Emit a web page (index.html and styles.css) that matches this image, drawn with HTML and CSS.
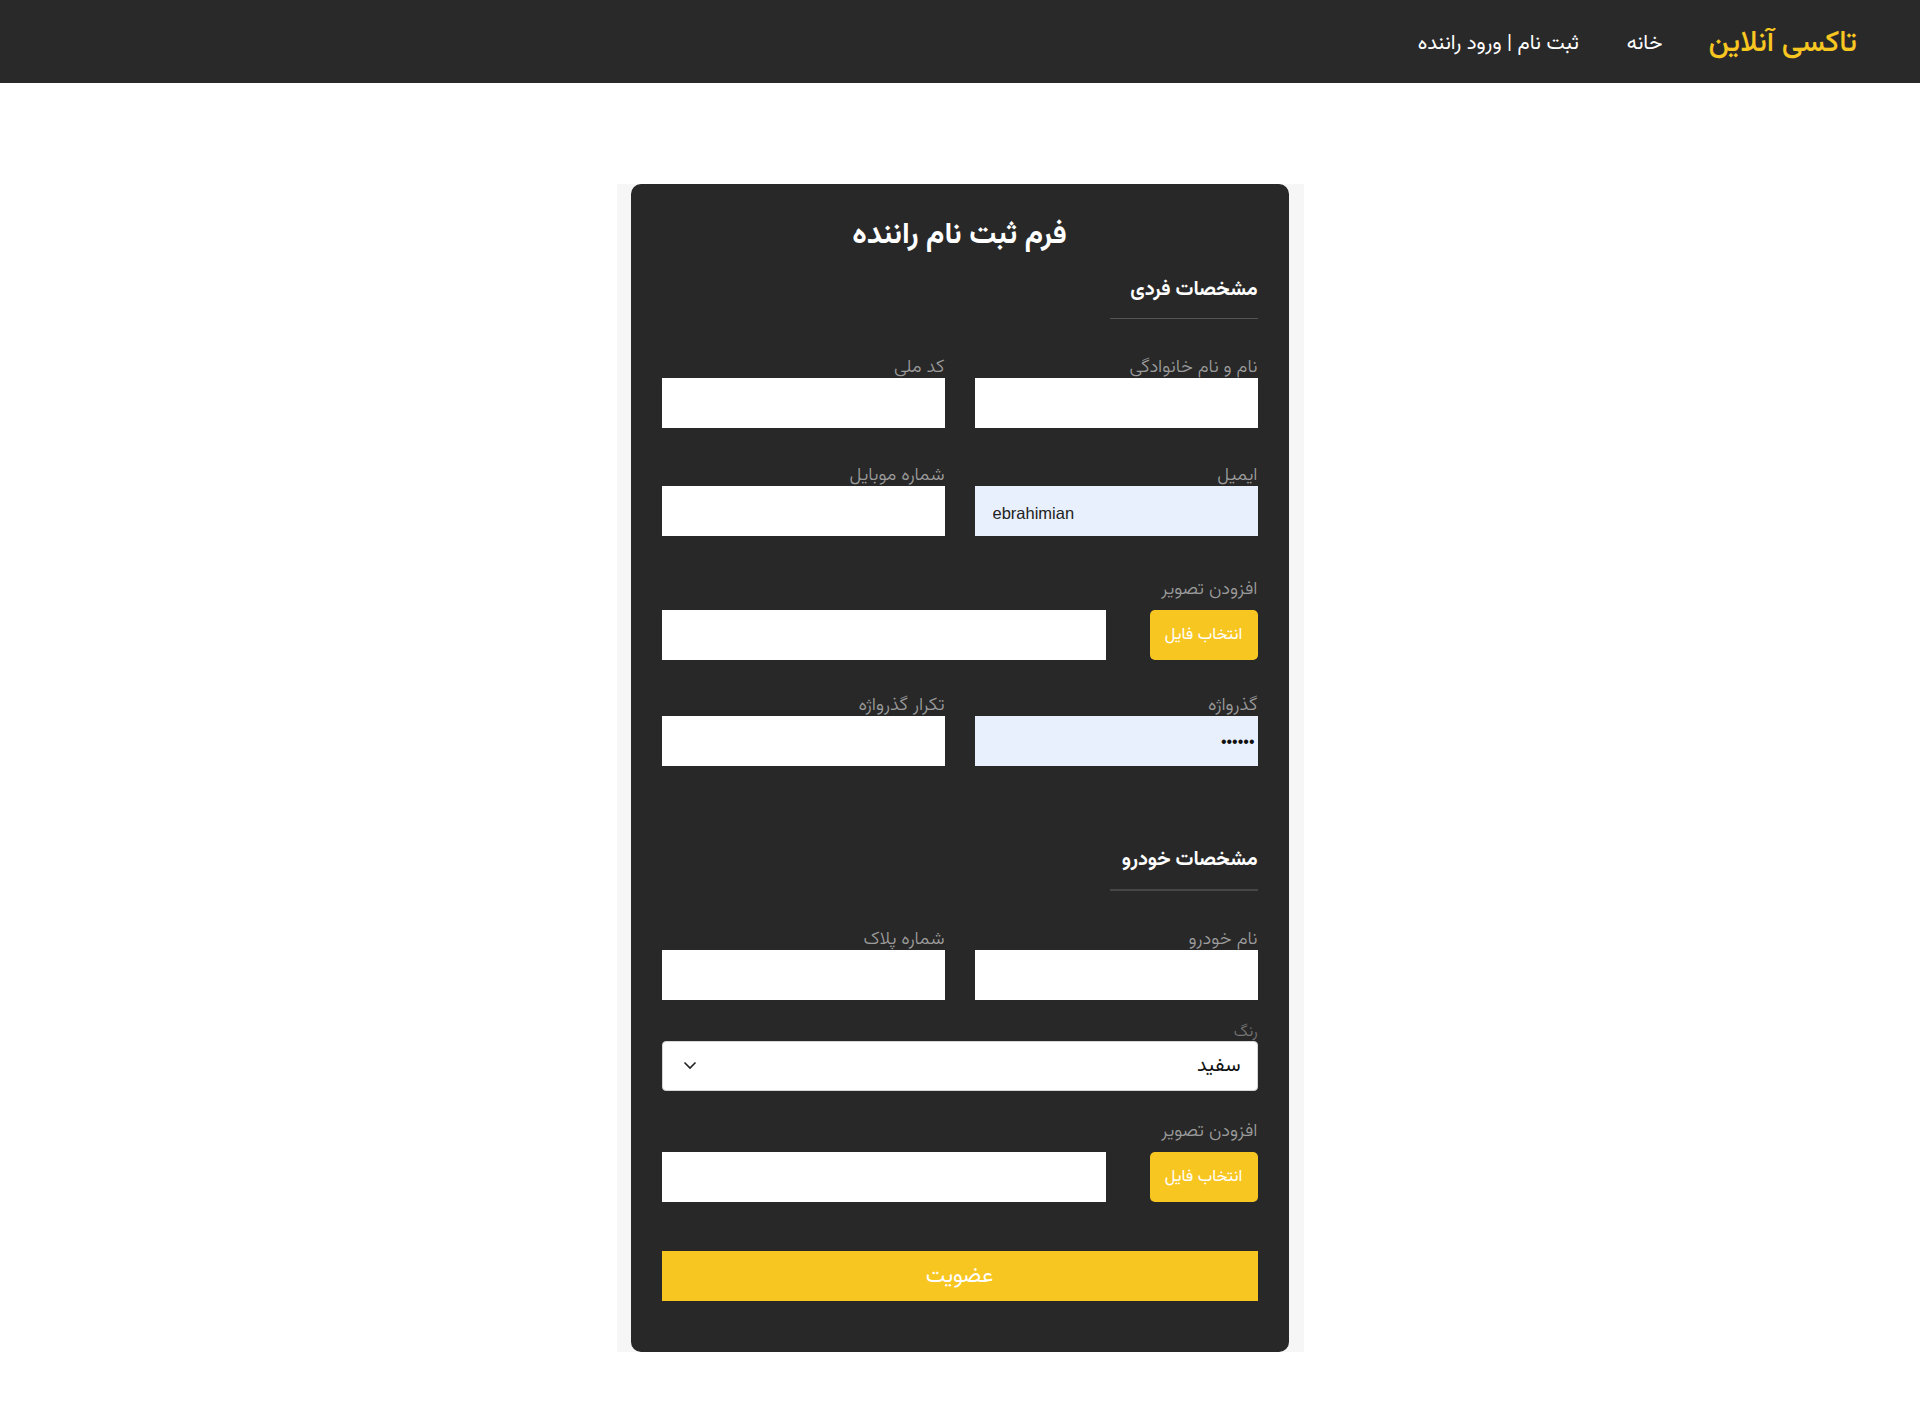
FILE: index.html
```html
<!DOCTYPE html>
<html lang="fa" dir="rtl">
<head>
<meta charset="utf-8">
<title>تاکسی آنلاین - ثبت نام راننده</title>
<link rel="stylesheet" href="styles.css">
</head>
<body>
<nav class="nav">
  <a class="logo" href="#">تاکسی آنلاین</a>
  <a class="nav-link home" href="#">خانه</a>
  <a class="nav-link" href="#">ثبت نام | ورود راننده</a>
</nav>
<main class="main">
  <div class="backdrop">
    <form class="card">
      <h1 class="title">فرم ثبت نام راننده</h1>

      <h2 class="section">مشخصات فردی</h2>
      <div class="divider"></div>

      <div class="grid2 row-first">
        <div class="field">
          <label class="label">نام و نام خانوادگی</label>
          <input class="input" type="text">
        </div>
        <div class="field">
          <label class="label">کد ملی</label>
          <input class="input" type="text">
        </div>
      </div>

      <div class="grid2 row-next">
        <div class="field">
          <label class="label">ایمیل</label>
          <input class="input autofill email" type="text" value="ebrahimian">
        </div>
        <div class="field">
          <label class="label">شماره موبایل</label>
          <input class="input" type="text">
        </div>
      </div>

      <label class="label file-label">افزودن تصویر</label>
      <div class="file-row">
        <button class="file-btn" type="button">انتخاب فایل</button>
        <input class="input" type="text">
      </div>

      <div class="grid2 row-pw">
        <div class="field">
          <label class="label">گذرواژه</label>
          <input class="input autofill pw" type="password" value="123456">
        </div>
        <div class="field">
          <label class="label">تکرار گذرواژه</label>
          <input class="input" type="password">
        </div>
      </div>

      <h2 class="section section-car">مشخصات خودرو</h2>
      <div class="divider divider-thick"></div>

      <div class="grid2 row-first">
        <div class="field">
          <label class="label">نام خودرو</label>
          <input class="input" type="text">
        </div>
        <div class="field">
          <label class="label">شماره پلاک</label>
          <input class="input" type="text">
        </div>
      </div>

      <label class="label label-small">رنگ</label>
      <div class="select-wrap">
        <select class="select">
          <option>سفید</option>
          <option>مشکی</option>
          <option>نقره ای</option>
        </select>
        <svg class="chevron" width="14" height="9" viewBox="0 0 14 9"><path d="M1.5 1.5 L7 7 L12.5 1.5" fill="none" stroke="#222" stroke-width="1.6"/></svg>
      </div>

      <label class="label file-label file-label-2">افزودن تصویر</label>
      <div class="file-row">
        <button class="file-btn" type="button">انتخاب فایل</button>
        <input class="input" type="text">
      </div>

      <button class="submit" type="button">عضویت</button>
    </form>
  </div>
</main>
</body>
</html>
```
FILE: styles.css
```css
* { box-sizing: border-box; }
html, body { margin: 0; padding: 0; }
body {
  font-family: "Vazirmatn", "Noto Sans Arabic", "DejaVu Sans", sans-serif;
  background: #ffffff;
  color: #fff;
}

.nav {
  height: 83px;
  background: #292929;
  display: flex;
  align-items: center;
  padding-right: 63px;
  padding-top: 4px;
}
.logo {
  color: #f8c620;
  font-size: 29.5px;
  font-weight: 500;
  text-decoration: none;
  margin-left: 46px;
}
.nav-link {
  color: #fff;
  font-size: 20.5px;
  text-decoration: none;
}
.home { margin-left: 48px; }

.main {
  display: flex;
  justify-content: center;
  padding-top: 101px;
  padding-bottom: 60px;
}
.backdrop {
  background: #f6f6f6;
  padding: 0 15px 0 14px;
}
.card {
  width: 658px;
  background: #282828;
  border-radius: 10px;
  padding: 30px 31px 51px;
  display: flex;
  flex-direction: column;
}

.title {
  margin: 0;
  font-size: 30px;
  font-weight: bold;
  line-height: 44px;
  text-align: center;
  color: #fff;
}
.section {
  margin: 18px 0 0;
  font-size: 20px;
  font-weight: bold;
  line-height: 28px;
  color: #fff;
}
.section-car { margin-top: 80px; }
.divider {
  width: 148px;
  height: 1px;
  background: #555;
  margin-top: 14px;
}
.divider-thick {
  height: 2px;
  background: #474747;
  margin-top: 15px;
}

.grid2 {
  display: grid;
  grid-template-columns: 1fr 1fr;
  column-gap: 30px;
}
.row-first { margin-top: 35px; }
.row-next { margin-top: 34px; }
.row-pw { margin-top: 32px; }

.field { display: flex; flex-direction: column; }
.label {
  display: block;
  height: 24px;
  line-height: 27px;
  font-size: 18.5px;
  font-weight: 300;
  color: #9c9c9c;
}
.label-small {
  height: 20px;
  line-height: 24px;
  font-size: 16px;
  color: #777;
  margin-top: 21px;
}
.file-label { margin-top: 40px; }
.file-label-2 { margin-top: 27px; }

.input {
  display: block;
  width: 100%;
  height: 50px;
  border: 0;
  border-radius: 0;
  background: #fff;
  padding: 0 18px;
  font-family: inherit;
  font-size: 16px;
  color: #222;
  outline: none;
}
.autofill { background: #e8f0fe; }
.email {
  direction: ltr;
  text-align: left;
  font-family: "Liberation Sans", Arial, sans-serif;
  font-size: 16.5px;
  padding-top: 4px;
}
.pw {
  padding-right: 3px;
  font-family: "Liberation Sans", Arial, sans-serif;
  font-size: 16px;
  color: #111;
  padding-top: 2px;
}

.file-row {
  display: flex;
  gap: 44px;
  margin-top: 10px;
}
.file-row .input { flex: 1; }
.file-btn {
  flex: none;
  width: 108px;
  height: 50px;
  border: 0;
  border-radius: 5px;
  background: #f8c620;
  color: #fff;
  font-family: inherit;
  font-size: 16.5px;
  padding: 0;
}

.select-wrap { position: relative; }
.select {
  display: block;
  width: 100%;
  height: 50px;
  appearance: none;
  -webkit-appearance: none;
  border: 1px solid #d6d6d6;
  border-radius: 4px;
  background: #fff;
  padding: 0 16px 0 40px;
  font-family: inherit;
  font-size: 20px;
  color: #111;
  outline: none;
}
.chevron {
  position: absolute;
  left: 21px;
  top: 20px;
  pointer-events: none;
}

.submit {
  margin-top: 49px;
  width: 100%;
  height: 50px;
  border: 0;
  border-radius: 0;
  background: #f8c620;
  color: #fff;
  font-family: inherit;
  font-size: 22px;
  padding: 0;
}
```
